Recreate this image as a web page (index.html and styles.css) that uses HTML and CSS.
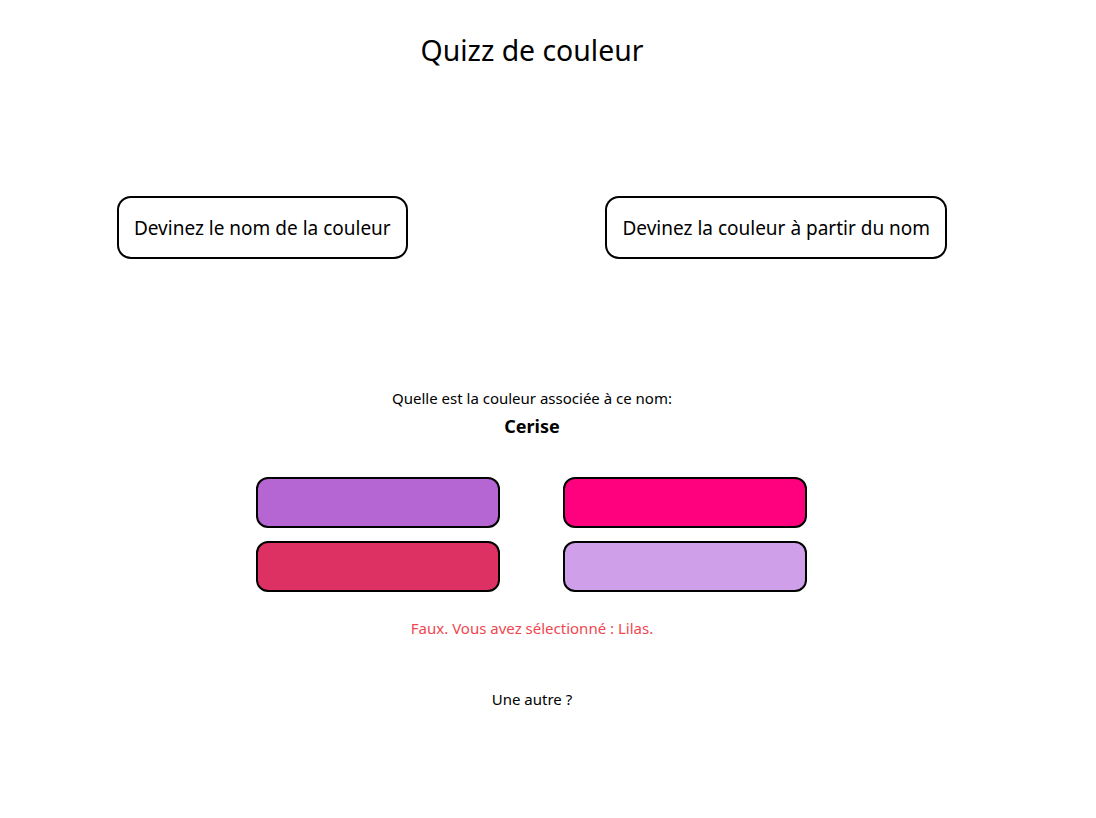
FILE: index.html
```html
<!DOCTYPE html>
<html lang="fr">
<head>
<meta charset="utf-8">
<title>Quizz de couleur</title>
<link rel="stylesheet" href="styles.css">
</head>
<body>
<div class="page">
  <h1 class="title">Quizz de couleur</h1>
  <div class="modes">
    <button class="mode-btn">Devinez le nom de la couleur</button>
    <button class="mode-btn">Devinez la couleur à partir du nom</button>
  </div>
  <div class="quiz">
    <p class="question">Quelle est la couleur associée à ce nom:</p>
    <p class="name">Cerise</p>
    <div class="choices">
      <button class="swatch c1"></button>
      <button class="swatch c2"></button>
      <button class="swatch c3"></button>
      <button class="swatch c4"></button>
    </div>
    <p class="feedback">Faux. Vous avez sélectionné : Lilas.</p>
    <p class="again">Une autre ?</p>
  </div>
</div>
</body>
</html>
```

FILE: styles.css
```css
html, body {
  margin: 0;
  padding: 0;
  background: #fff;
}
body {
  font-family: "Noto Sans", "Open Sans", sans-serif;
  color: #000;
}
.page {
  width: 1028px;
  margin-left: 18px;
  display: flex;
  flex-direction: column;
  align-items: center;
}
.title {
  margin: 30px 0 0;
  font-size: 28.4px;
  font-weight: 400;
  line-height: 40px;
}
.modes {
  align-self: stretch;
  display: flex;
  justify-content: space-around;
  margin-top: 126px;
}
.mode-btn {
  font-family: inherit;
  font-size: 19px;
  color: #000;
  background: #fff;
  border: 2px solid #000;
  border-radius: 14px;
  box-sizing: border-box;
  height: 63px;
  padding: 0 15px;
}
.quiz {
  display: flex;
  flex-direction: column;
  align-items: center;
  margin-top: 129px;
}
.question {
  margin: 0;
  font-size: 15px;
  line-height: 20px;
}
.name {
  margin: 6px 0 0;
  font-size: 18px;
  font-weight: 700;
  line-height: 24px;
}
.choices {
  display: grid;
  grid-template-columns: 244px 244px;
  column-gap: 63px;
  row-gap: 13px;
  margin-top: 39px;
  transform: translateX(-1px);
}
.swatch {
  box-sizing: border-box;
  height: 51px;
  border: 2px solid #000;
  border-radius: 12px;
  padding: 0;
}
.c1 { background: #b666d2; }
.c2 { background: #ff007f; }
.c3 { background: #de3163; }
.c4 { background: #cfa0e9; }
.feedback {
  margin: 26px 0 0;
  font-size: 15px;
  line-height: 20px;
  color: #f0474f;
}
.again {
  margin: 51px 0 0;
  font-size: 15px;
  line-height: 20px;
}
```
